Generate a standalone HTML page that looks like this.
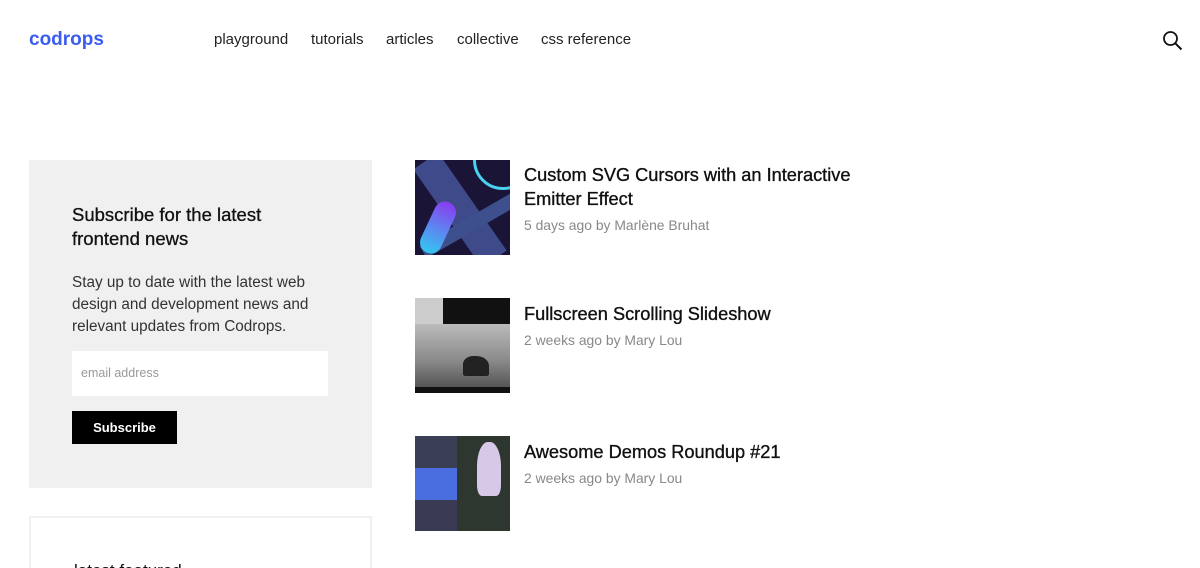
<!DOCTYPE html>
<html><head><meta charset="utf-8"><style>
*{margin:0;padding:0;box-sizing:border-box}
html,body{width:1200px;height:568px;overflow:hidden}
body{background:#fff;font-family:"Liberation Sans",sans-serif;color:#111;position:relative}
.a{position:absolute}
.logo{left:29px;top:29px;font-size:19px;font-weight:bold;color:#3b5cf0}
.nav{top:31px;font-size:15px;color:#222}
.box{left:29px;top:160px;width:343px;height:328px;background:#f0f0f0}
.box h3{position:absolute;left:43px;top:43px;font-size:18.5px;font-weight:normal;line-height:24px;color:#111;-webkit-text-stroke:0.3px #111}
.box p{position:absolute;left:43px;top:112px;width:270px;font-size:15.3px;line-height:22px;color:#333}
.inp{position:absolute;left:43px;top:191px;width:256px;height:45px;background:#fff;font-size:12.5px;color:#999;padding:15px 9px}
.btn{position:absolute;left:43px;top:251px;width:105px;height:33px;background:#000;color:#fff;font-size:13px;font-weight:bold;text-align:center;line-height:33px}
.box2{left:29px;top:516px;width:343px;height:80px;border:2px solid #f0f0f0}
.th{left:415px;width:95px;height:95px;overflow:hidden}
.t{left:524px;font-size:18.2px;line-height:24px;color:#111;-webkit-text-stroke:0.35px #111}
.m{left:524px;font-size:13.9px;color:#888}
</style></head><body>
<div class="a logo">codrops</div>
<div class="a nav" style="left:214px">playground</div>
<div class="a nav" style="left:311px">tutorials</div>
<div class="a nav" style="left:386px">articles</div>
<div class="a nav" style="left:457px">collective</div>
<div class="a nav" style="left:541px">css reference</div>
<svg class="a" style="left:1162px;top:30px" width="22" height="22" viewBox="0 0 22 22"><circle cx="8.5" cy="8.5" r="6.5" fill="none" stroke="#111" stroke-width="1.8"/><path d="M13.3 13.3L19.5 19.5" stroke="#111" stroke-width="2"/></svg>

<div class="a box"><h3>Subscribe for the latest<br>frontend news</h3>
<p>Stay up to date with the latest web design and development news and relevant updates from Codrops.</p>
<div class="inp">email address</div><div class="btn">Subscribe</div></div>
<div class="a box2"><div style="position:absolute;left:43px;top:43px;font-size:17px;line-height:20px">latest featured</div></div>

<div class="a th" style="top:160px;background:#1a1437">
<div style="position:absolute;left:30px;top:-10px;width:30px;height:120px;background:#3e4a8a;transform:rotate(-35deg)"></div>
<div style="position:absolute;left:0;top:55px;width:120px;height:14px;background:#3e4f8e;transform:rotate(-30deg)"></div>
<div style="position:absolute;left:12px;top:40px;width:22px;height:55px;border-radius:12px;background:linear-gradient(#8a3cf0,#33c8f0);transform:rotate(25deg)"></div>
<div style="position:absolute;left:58px;top:-30px;width:60px;height:60px;border-radius:50%;border:3px solid #4ad0f0"></div></div>
<div class="a t" style="top:163px">Custom SVG Cursors with an Interactive<br>Emitter Effect</div>
<div class="a m" style="top:217px">5 days ago by Marlène Bruhat</div>

<div class="a th" style="top:298px;background:#111">
<div style="position:absolute;left:0;top:26px;width:95px;height:63px;background:linear-gradient(#bbb,#888 60%,#555)"></div>
<div style="position:absolute;left:0;top:0;width:28px;height:26px;background:#ccc"></div>
<div style="position:absolute;left:48px;top:58px;width:26px;height:20px;background:#222;border-radius:40% 50% 10% 10%"></div></div>
<div class="a t" style="top:302px">Fullscreen Scrolling Slideshow</div>
<div class="a m" style="top:332px">2 weeks ago by Mary Lou</div>

<div class="a th" style="top:436px;background:#2e3630">
<div style="position:absolute;left:0;top:0;width:42px;height:32px;background:#3a3f55"></div>
<div style="position:absolute;left:0;top:32px;width:42px;height:32px;background:#4a6ee0"></div>
<div style="position:absolute;left:0;top:64px;width:42px;height:31px;background:#3a3a55"></div>
<div style="position:absolute;left:62px;top:6px;width:24px;height:54px;border-radius:45% 45% 20% 20%;background:#d8c8e8"></div></div>
<div class="a t" style="top:440px">Awesome Demos Roundup #21</div>
<div class="a m" style="top:470px">2 weeks ago by Mary Lou</div>
</body></html>
